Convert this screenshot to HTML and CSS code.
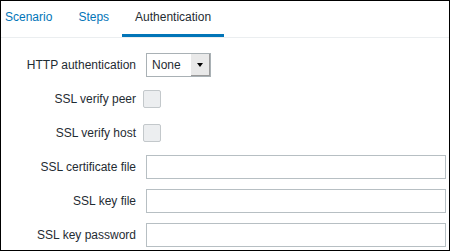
FILE: index.html
```html
<!DOCTYPE html>
<html>

<head>
  <title>Web scenario</title>
  <link rel="stylesheet" href="styles.css">
</head>

<body>
  <div class="frame">
    <ul class="tabs">
      <li class="tab"><a href="#">Scenario</a></li>
      <li class="tab"><a href="#">Steps</a></li>
      <li class="tab active"><a href="#">Authentication</a></li>
    </ul>
    <div class="form-grid">
      <label class="form-label">HTTP authentication</label>
      <div class="form-field">
        <div class="select">
          <span class="select-value">None</span>
          <span class="select-btn"><span class="caret"></span></span>
        </div>
      </div>

      <label class="form-label">SSL verify peer</label>
      <div class="form-field"><span class="checkbox"></span></div>

      <label class="form-label">SSL verify host</label>
      <div class="form-field"><span class="checkbox"></span></div>

      <label class="form-label">SSL certificate file</label>
      <div class="form-field"><input class="text-input" type="text"></div>

      <label class="form-label">SSL key file</label>
      <div class="form-field"><input class="text-input" type="text"></div>

      <label class="form-label">SSL key password</label>
      <div class="form-field"><input class="text-input" type="text"></div>
    </div>
  </div>
</body>

</html>
```

FILE: styles.css
```css
html,
body {
  margin: 0;
  padding: 0;
  background: #fff;
}

body {
  font-family: "Liberation Sans", Arial, sans-serif;
  font-size: 12px;
  color: #1f2c33;
}

.frame {
  width: 450px;
  height: 251px;
  box-sizing: border-box;
  border: 1px solid #000;
  overflow: hidden;
}

.tabs {
  display: flex;
  margin: 0 0 0 -9px;
  padding: 0;
  list-style: none;
  border-bottom: 1px solid #ebeef0;
}

.tab {
  height: 36px;
  box-sizing: border-box;
  padding: 0 13px;
  line-height: 33px;
  border-bottom: 3px solid transparent;
}

.tab a {
  color: #0275b8;
  text-decoration: none;
}

.tab.active {
  border-bottom-color: #0275b8;
}

.tab.active a {
  color: #1f2c33;
}

.form-grid {
  display: grid;
  grid-template-columns: 135px 1fr;
  grid-auto-rows: 24px;
  column-gap: 10px;
  row-gap: 10px;
  align-items: center;
  padding-top: 15px;
}

.form-label {
  text-align: right;
}

.form-field {
  display: flex;
  align-items: center;
}

.select {
  display: flex;
  width: 65px;
  height: 24px;
  box-sizing: border-box;
  border: 1px solid #a9b1b5;
  background: #fff;
}

.select-value {
  flex: 1;
  padding-left: 5px;
  line-height: 22px;
}

.select-btn {
  width: 19px;
  display: flex;
  align-items: center;
  justify-content: center;
  background: #e9e9e9;
  border-right: 1px solid #9a9a9a;
  border-bottom: 1px solid #9a9a9a;
  box-sizing: border-box;
}

.caret {
  width: 0;
  height: 0;
  border-left: 3px solid transparent;
  border-right: 3px solid transparent;
  border-top: 4px solid #000;
}

.checkbox {
  display: block;
  width: 18px;
  height: 18px;
  margin-left: -3px;
  box-sizing: border-box;
  border: 1px solid #c3c8cb;
  border-radius: 2px;
  background: #eceef0;
}

.text-input {
  width: 300px;
  height: 24px;
  box-sizing: border-box;
  margin: 0;
  padding: 0 5px;
  border: 1px solid #b7bfc3;
  background: #fff;
  font: inherit;
}
```
